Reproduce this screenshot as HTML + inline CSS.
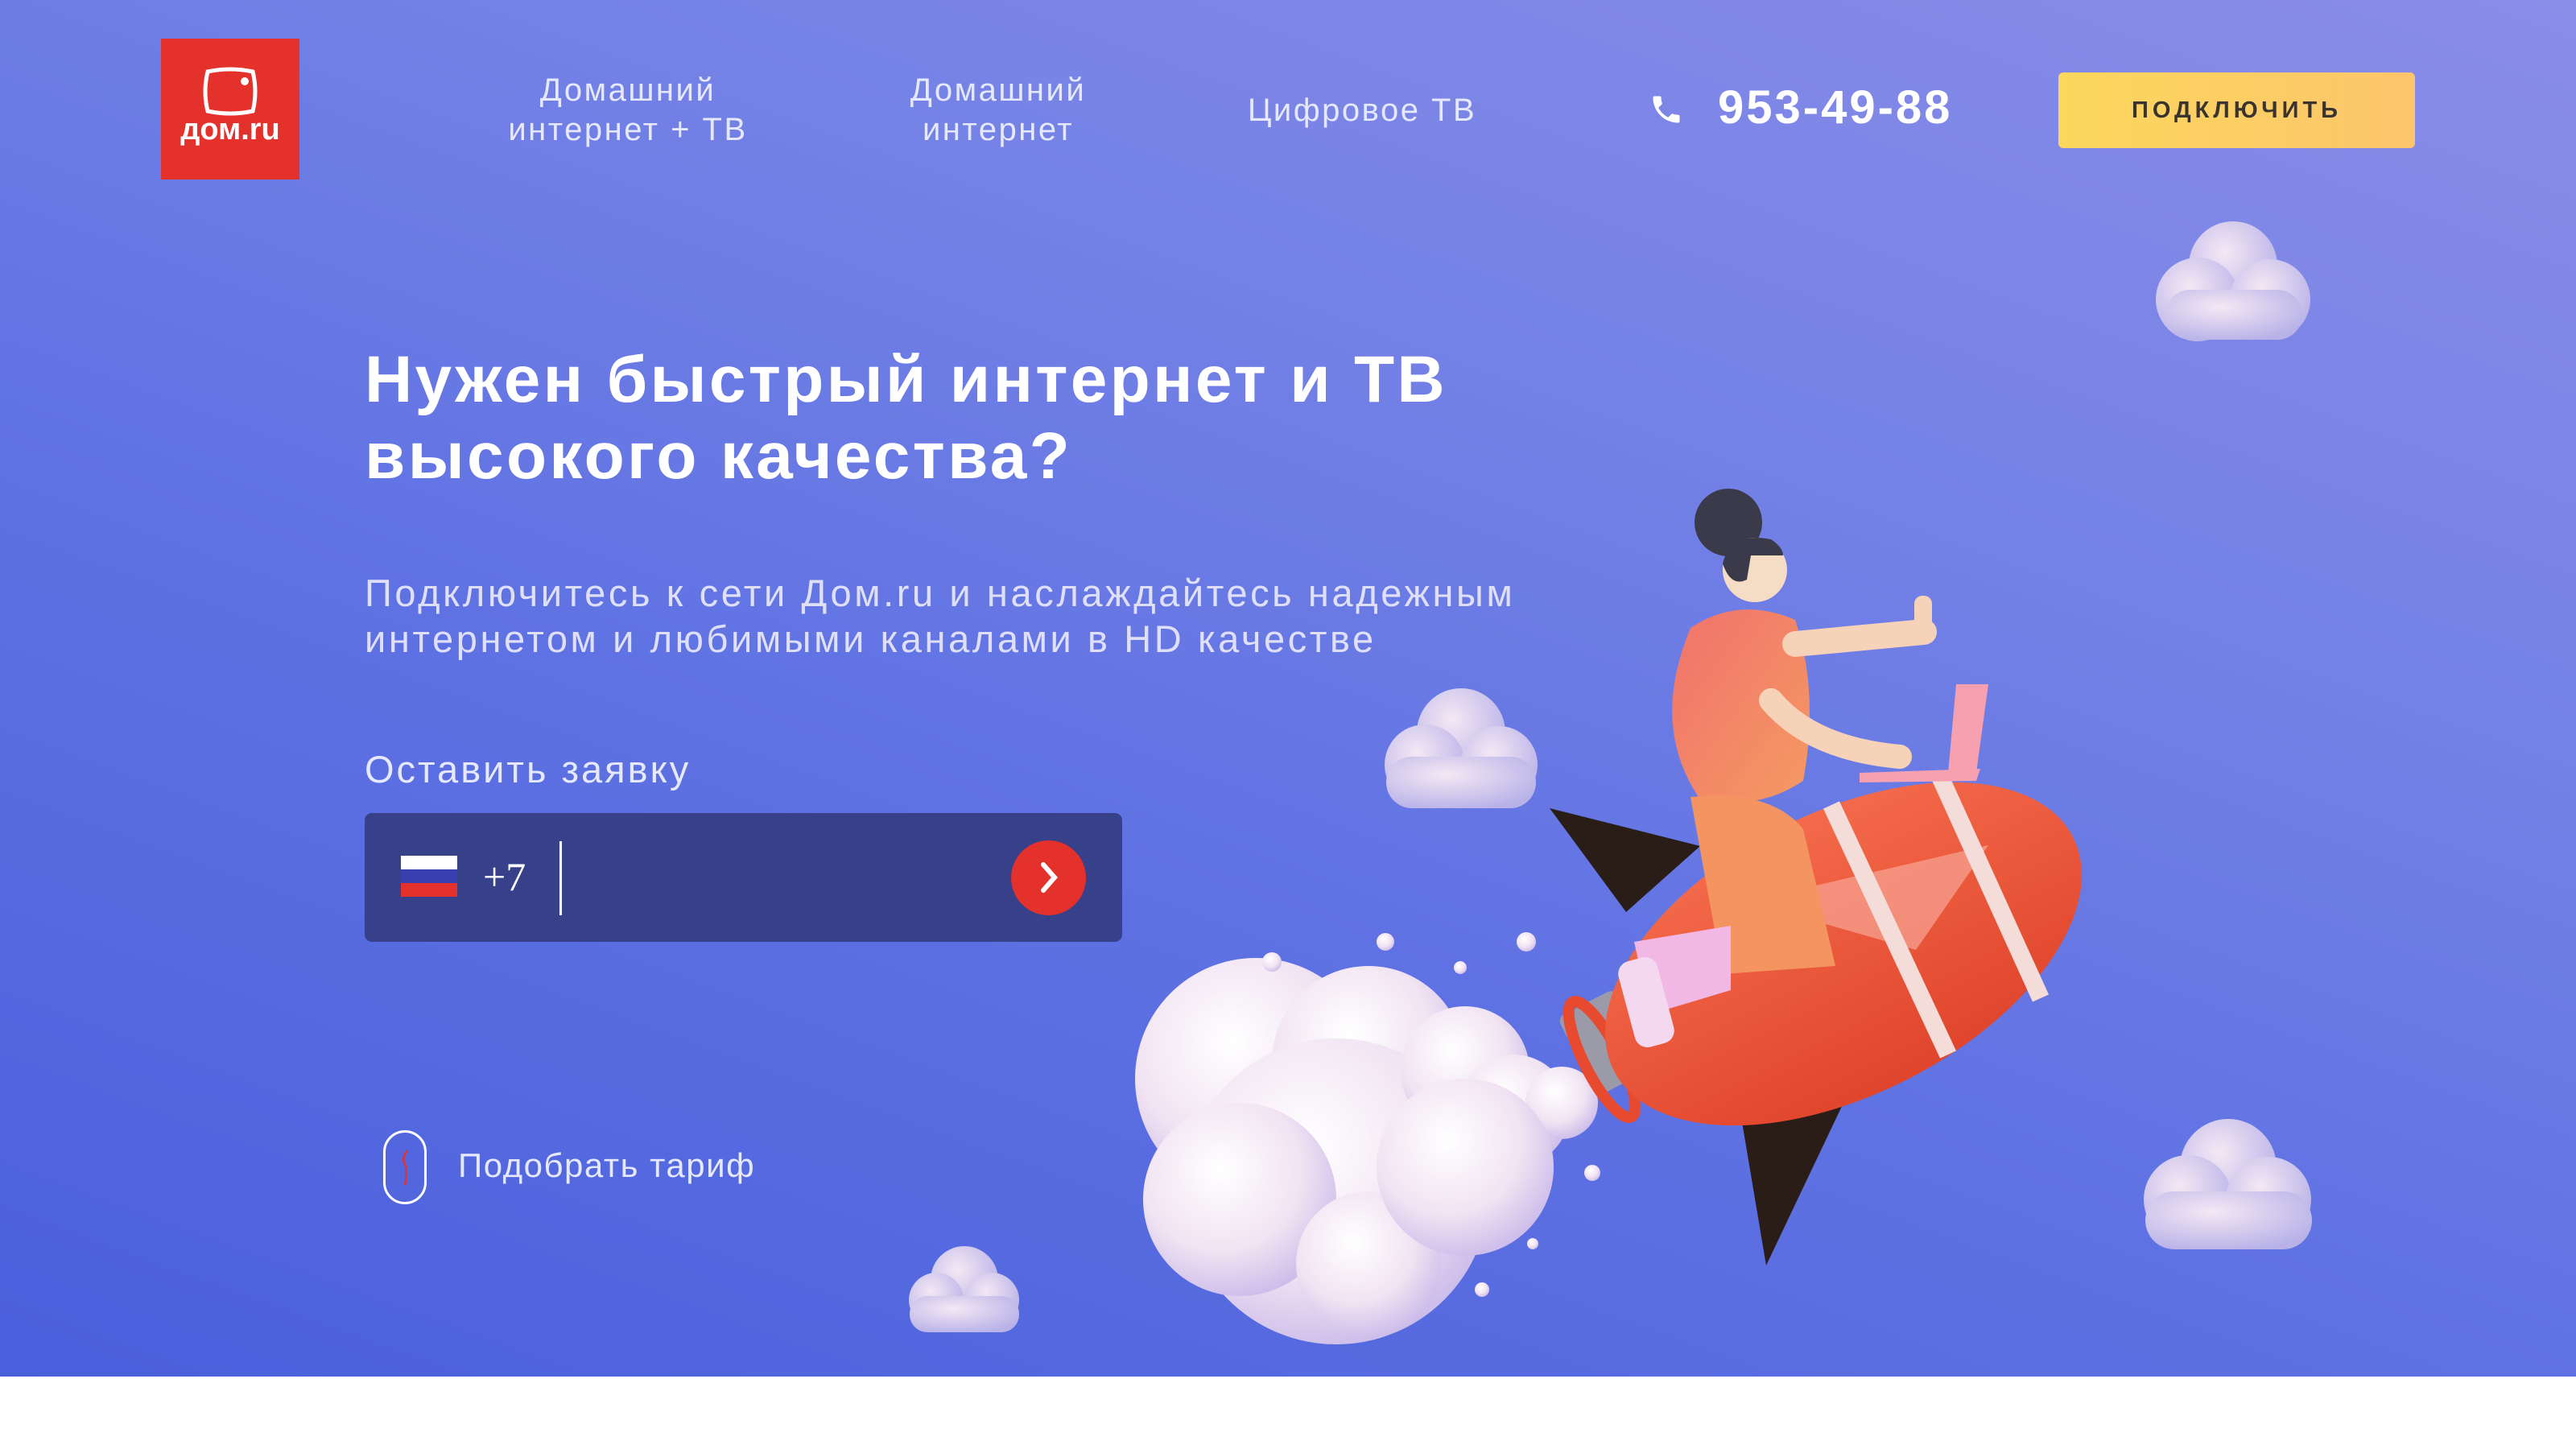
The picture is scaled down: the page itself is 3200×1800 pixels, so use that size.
<!DOCTYPE html>
<html><head><meta charset="utf-8">
<style>
*{margin:0;padding:0;box-sizing:border-box}
body{width:3200px;height:1800px;background:#fff;font-family:"Liberation Sans",sans-serif;overflow:hidden;position:relative}
.hero{position:absolute;left:0;top:0;width:3200px;height:1710px;background:linear-gradient(20deg,#4a5fdc 0%,#5f72e3 40%,#7683e6 70%,#8a8ce8 100%)}
.abs{position:absolute}
.nav{color:#e6e8fb;font-size:40px;text-align:center;line-height:49px;font-weight:300;letter-spacing:2.5px}
</style></head><body>
<div class="hero"></div>

<div class="abs" style="left:200px;top:48px;width:172px;height:175px;background:#e4312b"></div>
<svg class="abs" style="left:200px;top:48px" width="172" height="175" viewBox="0 0 172 175">
<path d="M58 41 Q86 35 114 41 Q120 66 114 90 Q86 96 58 90 Q52 66 58 41Z" fill="none" stroke="#fff" stroke-width="5"/>
<circle cx="104" cy="53" r="5" fill="#fff"/>
</svg>
<div class="abs" style="left:200px;top:140px;width:172px;text-align:center;color:#fff;font-weight:bold;font-size:38px">дом.ru</div>

<div class="abs nav" style="left:580px;top:88px;width:400px">Домашний<br>интернет + ТВ</div>
<div class="abs nav" style="left:1040px;top:88px;width:400px">Домашний<br>интернет</div>
<div class="abs nav" style="left:1492px;top:113px;width:400px">Цифровое ТВ</div>
<svg class="abs" style="left:2048px;top:114px" width="44" height="44" viewBox="0 0 24 24"><path d="M6.6 10.8c1.4 2.8 3.8 5.1 6.6 6.6l2.2-2.2c.3-.3.7-.4 1-.2 1.1.4 2.3.6 3.6.6.6 0 1 .4 1 1V20c0 .6-.4 1-1 1C10.6 21 3 13.4 3 4c0-.6.4-1 1-1h3.5c.6 0 1 .4 1 1 0 1.3.2 2.5.6 3.6.1.3 0 .7-.2 1L6.6 10.8z" fill="#fff"/></svg>
<div class="abs" style="left:2134px;top:100px;color:#fff;font-weight:bold;font-size:58px;letter-spacing:3px">953-49-88</div>
<div class="abs" style="left:2557px;top:90px;width:443px;height:94px;border-radius:6px;background:linear-gradient(90deg,#fbd75c,#fdc56c);color:#3a3330;font-size:29px;font-weight:bold;letter-spacing:5px;text-align:center;line-height:94px">ПОДКЛЮЧИТЬ</div>

<div class="abs" style="left:453px;top:424px;color:#fff;font-weight:bold;font-size:82px;line-height:95px;letter-spacing:3.3px">Нужен быстрый интернет и ТВ<br>высокого качества?</div>
<div class="abs" style="left:453px;top:708px;color:#dfe0f8;font-size:47px;line-height:57px;font-weight:300;letter-spacing:3.6px">Подключитесь к сети Дом.ru и наслаждайтесь надежным<br>интернетом и любимыми каналами в HD качестве</div>
<div class="abs" style="left:453px;top:928px;color:#e6e8fb;font-size:47px;letter-spacing:3px">Оставить заявку</div>

<div class="abs" style="left:453px;top:1010px;width:941px;height:160px;border-radius:9px;background:#36418a"></div>
<div class="abs" style="left:498px;top:1063px;width:70px;height:17px;background:#fff"></div>
<div class="abs" style="left:498px;top:1080px;width:70px;height:17px;background:#3a3fb0"></div>
<div class="abs" style="left:498px;top:1097px;width:70px;height:17px;background:#e4312b"></div>
<div class="abs" style="left:600px;top:1060px;color:#fff;font-size:50px;font-family:'Liberation Serif',serif">+7</div>
<div class="abs" style="left:695px;top:1045px;width:3px;height:92px;background:#fff"></div>
<div class="abs" style="left:1256px;top:1044px;width:93px;height:93px;border-radius:50%;background:#e4312b"></div>
<svg class="abs" style="left:1256px;top:1044px" width="93" height="93"><path d="M40 30 L54 46 L40 62" fill="none" stroke="#fff" stroke-width="6" stroke-linecap="round"/></svg>

<div class="abs" style="left:476px;top:1404px;width:54px;height:92px;border:3px solid #fff;border-radius:27px"></div>
<svg class="abs" style="left:476px;top:1404px" width="54" height="92"><path d="M30 25 Q22 35 28 45 Q30 55 27 68" fill="none" stroke="#e4312b" stroke-width="2.5"/></svg>
<div class="abs" style="left:569px;top:1424px;color:#e6e8fb;font-size:42px;font-weight:300;letter-spacing:1.5px">Подобрать тариф</div>

<svg class="abs" style="left:0;top:0" width="3200" height="1710">
<defs>
<radialGradient id="cl" cx="40%" cy="35%" r="70%"><stop offset="0" stop-color="#fff"/><stop offset="0.6" stop-color="#f1e3f2"/><stop offset="1" stop-color="#c9b9ea"/></radialGradient>
<radialGradient id="cl2" cx="40%" cy="35%" r="70%"><stop offset="0" stop-color="#f4e8f4"/><stop offset="1" stop-color="#b8b2e8"/></radialGradient>
<linearGradient id="rk" x1="0" y1="0" x2="0" y2="1"><stop offset="0" stop-color="#f46a4b"/><stop offset="1" stop-color="#e0452c"/></linearGradient>
<linearGradient id="sh" x1="0" y1="0" x2="1" y2="1"><stop offset="0" stop-color="#f0726c"/><stop offset="1" stop-color="#f59a62"/></linearGradient>
</defs>
<g fill="url(#cl2)">
<circle cx="2774" cy="330" r="55"/><circle cx="2730" cy="372" r="52"/><circle cx="2820" cy="372" r="50"/><rect x="2690" y="360" width="170" height="62" rx="31"/>
<circle cx="1815" cy="910" r="55"/><circle cx="1770" cy="950" r="50"/><circle cx="1862" cy="950" r="48"/><rect x="1722" y="940" width="186" height="64" rx="32"/>
<circle cx="2768" cy="1450" r="60"/><circle cx="2718" cy="1490" r="55"/><circle cx="2818" cy="1490" r="53"/><rect x="2665" y="1480" width="207" height="72" rx="36"/>
<circle cx="1198" cy="1590" r="42"/><circle cx="1163" cy="1615" r="34"/><circle cx="1232" cy="1615" r="34"/><rect x="1130" y="1610" width="136" height="45" rx="22"/>
</g>
<g fill="url(#cl)">
<circle cx="1560" cy="1340" r="150"/><circle cx="1700" cy="1320" r="120"/><circle cx="1660" cy="1480" r="190"/><circle cx="1540" cy="1490" r="120"/>
<circle cx="1820" cy="1330" r="80"/><circle cx="1880" cy="1380" r="70"/><circle cx="1940" cy="1370" r="45"/><circle cx="1700" cy="1570" r="90"/><circle cx="1820" cy="1450" r="110"/>
<circle cx="1580" cy="1195" r="12"/><circle cx="1721" cy="1170" r="11"/><circle cx="1814" cy="1202" r="8"/><circle cx="1896" cy="1170" r="12"/><circle cx="1978" cy="1457" r="10"/><circle cx="1904" cy="1545" r="7"/><circle cx="1841" cy="1602" r="9"/>
</g>
<path d="M1925 1004 L2112 1051 L2020 1133 Z" fill="#2a1d18"/>
<path d="M2163 1388 L2290 1370 L2194 1572 Z" fill="#2a1d18"/>
<rect x="1955" y="1240" width="80" height="110" rx="10" fill="#9a9aa8" transform="rotate(-27 1995 1295)"/>
<ellipse cx="1990" cy="1316" rx="22" ry="80" fill="none" stroke="#e84a30" stroke-width="14" transform="rotate(-27 1990 1316)"/>
<ellipse cx="2290" cy="1185" rx="320" ry="175" fill="url(#rk)" transform="rotate(-27 2290 1185)"/>
<path d="M2170 1120 L2470 1050 L2380 1180 Z" fill="#f7a596" opacity="0.7"/>
<g stroke="#f4ddd8" stroke-width="22" fill="none">
<path d="M2275 1000 L2420 1310"/><path d="M2410 965 L2535 1240"/>
</g>
<path d="M2430 850 L2470 850 L2455 960 L2420 960 Z" fill="#f7a0b0"/>
<path d="M2310 960 L2460 955 L2455 970 L2310 972 Z" fill="#f7a0b0"/>
<path d="M2100 780 Q2160 740 2230 770 Q2260 860 2240 970 Q2180 1010 2110 990 Q2050 900 2100 780Z" fill="url(#sh)"/>
<path d="M2230 800 L2390 785" stroke="#f6d3b8" stroke-width="32" stroke-linecap="round"/>
<rect x="2378" y="740" width="22" height="60" rx="10" fill="#f6d3b8"/>
<path d="M2200 870 Q2250 930 2360 940" stroke="#f6d3b8" stroke-width="30" fill="none" stroke-linecap="round"/>
<path d="M2100 990 Q2200 980 2240 1030 L2280 1200 L2140 1210 Z" fill="#f49460"/>
<path d="M2030 1170 L2150 1150 L2150 1230 L2050 1260 Z" fill="#f1b8e6"/>
<rect x="2020" y="1190" width="50" height="110" rx="16" fill="#f4d8f0" transform="rotate(-15 2045 1245)"/>
<circle cx="2147" cy="649" r="42" fill="#3b3a4a"/>
<circle cx="2180" cy="708" r="40" fill="#f5dcc5"/>
<path d="M2140 700 Q2150 660 2200 670 Q2215 680 2215 690 L2175 690 L2170 720 Q2150 730 2140 700Z" fill="#3b3a4a"/>
</svg>
</body></html>
